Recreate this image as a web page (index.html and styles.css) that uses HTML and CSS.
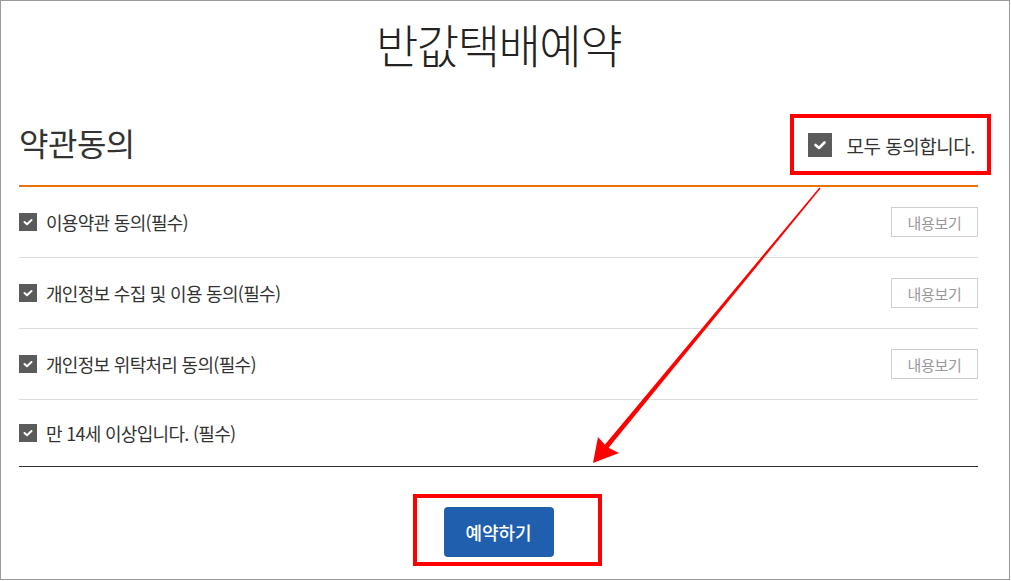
FILE: index.html
```html
<!DOCTYPE html>
<html lang="ko">
<head>
<meta charset="utf-8">
<title>반값택배예약</title>
<link rel="stylesheet" href="styles.css">
</head>
<body>
<div class="frame">
  <h1 class="title">반값택배예약</h1>
  <div class="agree-head">
    <h2 class="agree-title">약관동의</h2>
    <label class="agree-all">
      <span class="chk chk-lg"><svg viewBox="0 0 24 24" width="24" height="24"><polyline points="7.5,12 11,15 16.5,9.5" fill="none" stroke="#fff" stroke-width="2.6" stroke-linecap="round" stroke-linejoin="round"/></svg></span>
      <span class="agree-all-text">모두 동의합니다.</span>
    </label>
  </div>
  <ul class="terms">
    <li class="term">
      <span class="chk"><svg viewBox="0 0 18 18" width="18" height="18"><polyline points="5.5,9 8,11.3 12.5,7" fill="none" stroke="#fff" stroke-width="2" stroke-linecap="round" stroke-linejoin="round"/></svg></span>
      <span class="term-text">이용약관 동의(필수)</span>
      <button class="view-btn">내용보기</button>
    </li>
    <li class="term">
      <span class="chk"><svg viewBox="0 0 18 18" width="18" height="18"><polyline points="5.5,9 8,11.3 12.5,7" fill="none" stroke="#fff" stroke-width="2" stroke-linecap="round" stroke-linejoin="round"/></svg></span>
      <span class="term-text">개인정보 수집 및 이용 동의(필수)</span>
      <button class="view-btn">내용보기</button>
    </li>
    <li class="term">
      <span class="chk"><svg viewBox="0 0 18 18" width="18" height="18"><polyline points="5.5,9 8,11.3 12.5,7" fill="none" stroke="#fff" stroke-width="2" stroke-linecap="round" stroke-linejoin="round"/></svg></span>
      <span class="term-text">개인정보 위탁처리 동의(필수)</span>
      <button class="view-btn">내용보기</button>
    </li>
    <li class="term term-last">
      <span class="chk"><svg viewBox="0 0 18 18" width="18" height="18"><polyline points="5.5,9 8,11.3 12.5,7" fill="none" stroke="#fff" stroke-width="2" stroke-linecap="round" stroke-linejoin="round"/></svg></span>
      <span class="term-text">만 14세 이상입니다. (필수)</span>
    </li>
  </ul>
  <div class="actions">
    <button class="submit-btn">예약하기</button>
  </div>

  <div class="mark mark-all"></div>
  <div class="mark mark-submit"></div>
  <svg class="arrow" viewBox="0 0 1011 581" width="1011" height="581">
    <polygon points="819.4,187.6 820.6,188.4 608,448.6 604.2,445.4" fill="#ff0000"/>
    <polygon points="593,463 598,437 607,447 619,453" fill="#ff0000"/>
  </svg>
</div>
</body>
</html>
```

FILE: styles.css
```css
* { box-sizing: border-box; }
html, body { margin: 0; padding: 0; background: #fff; }
body {
  font-family: "Noto Sans CJK KR", "Noto Sans", sans-serif;
  color: #333;
}
.frame {
  position: relative;
  width: 1010px;
  height: 580px;
  border: 1px solid #9a9a9a;
  padding: 0 31px 0 18px;
  overflow: hidden;
}
.title {
  margin: 17px 0 0;
  height: 50px;
  line-height: 50px;
  text-align: center;
  font-size: 46px;
  font-weight: 300;
  letter-spacing: -1.5px;
  color: #222;
}
.agree-head {
  height: 119px;
  padding-top: 30px;
  display: flex;
  align-items: center;
  justify-content: space-between;
  border-bottom: 2px solid #e8730f;
}
.agree-title {
  margin: 0;
  font-size: 32px;
  font-weight: 400;
  letter-spacing: -0.5px;
  line-height: 36px;
  color: #333;
}
.agree-all {
  display: flex;
  align-items: center;
  gap: 15px;
  margin-top: 7px;
  margin-right: 3px;
}
.agree-all-text {
  font-size: 19px;
  letter-spacing: -0.5px;
  color: #333;
}
.chk {
  display: inline-flex;
  width: 18px;
  height: 18px;
  background: #5b5b5b;
  flex: none;
}
.chk svg { display: block; }
.chk-lg { width: 24px; height: 24px; }
.terms {
  list-style: none;
  margin: 0;
  padding: 0;
  border-bottom: 1px solid #333;
}
.term {
  height: 71px;
  display: flex;
  align-items: center;
  gap: 9px;
  border-bottom: 1px solid #dcdcdc;
}
.term-last {
  height: 66px;
  border-bottom: 0;
}
.term-text {
  flex: 1;
  font-size: 18px;
  letter-spacing: -0.7px;
  color: #333;
}
.view-btn {
  width: 87px;
  height: 30px;
  border: 1px solid #cfcfcf;
  background: #fff;
  color: #999;
  font-family: inherit;
  font-size: 15px;
  letter-spacing: -0.3px;
  padding: 0;
}
.actions {
  display: flex;
  justify-content: center;
  padding-top: 40px;
}
.submit-btn {
  width: 110px;
  height: 50px;
  border: 0;
  border-radius: 4px;
  background: #1f5fae;
  color: #fff;
  font-family: inherit;
  font-size: 18px;
  font-weight: 500;
  padding: 0;
}
.mark {
  position: absolute;
  border: 4px solid #ff0000;
}
.mark-all { left: 789px; top: 113px; width: 201px; height: 61px; }
.mark-submit { left: 412px; top: 493px; width: 189px; height: 72px; }
.arrow {
  position: absolute;
  left: -1px;
  top: -1px;
  pointer-events: none;
}
```
